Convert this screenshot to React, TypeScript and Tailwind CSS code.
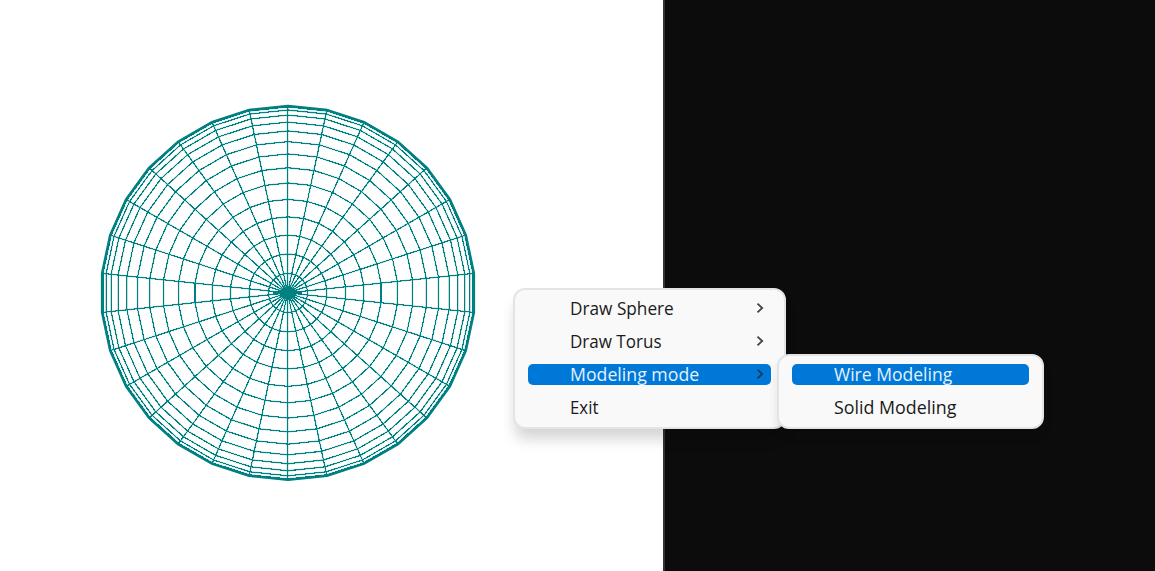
import React from 'react';
import clsx from 'clsx';

const SLICES = 30;
const RADIUS = 187;
const CX = 288;
const CY = 292.9;

const point = (radius: number, slice: number) => {
  const angle = (slice * 2 * Math.PI) / SLICES;
  return `${(CX + radius * Math.sin(angle)).toFixed(2)},${(CY - radius * Math.cos(angle)).toFixed(2)}`;
};

const slices = Array.from({ length: SLICES }, (_, i) => i);
const rings = Array.from({ length: 15 }, (_, i) => RADIUS * Math.sin(((i + 1) * Math.PI) / 30));

function Mesh() {
  return (
    <>
      {rings.map((r, i) => (
        <polygon key={i} points={slices.map((s) => point(r, s)).join(' ')} />
      ))}
      {slices.map((s) => (
        <polyline key={s} points={`${CX - 0.4},${CY} ${s % 15 === 0 ? `${CX - 0.4},${s ? CY + RADIUS : CY - RADIUS}` : point(RADIUS, s)}`} />
      ))}
    </>
  );
}

function WireSphere() {
  return (
    <svg width="663" height="571" viewBox="0 0 663 571" fill="none" stroke="#008080" className="block">
      <g strokeWidth="1.8" strokeOpacity="0.3">
        <Mesh />
      </g>
      <g strokeWidth="1.1" shapeRendering="crispEdges">
        <Mesh />
      </g>
      <polygon strokeWidth="2.3" points={slices.map((s) => point(RADIUS, s)).join(' ')} />
      <path d="M273 293h29" strokeWidth="2" />
      <ellipse cx="288" cy="293" rx="8.5" ry="6.5" fill="#008080" stroke="none" />
    </svg>
  );
}

type ItemProps = { label: string; fit: string; active?: boolean; submenu?: boolean };

function MenuItem({ label, fit, active, submenu }: ItemProps) {
  return (
    <div className="flex h-[33px] items-center">
      <div
        className={clsx(
          'flex h-[21px] w-full items-center justify-between rounded-[5px] pr-[7px] pl-[42px]',
          active ? 'bg-[#0078d7] text-[#e4f1fb]' : 'text-[#1a1a1a]',
        )}
      >
        <span className={clsx('-mt-0.5 inline-block origin-left leading-[26px] whitespace-nowrap', fit)}>{label}</span>
        {submenu && (
          <svg
            width="8"
            height="12"
            viewBox="0 0 8 12"
            fill="none"
            stroke={active ? '#173a5c' : '#444'}
            strokeWidth="1.8"
            className="-mt-px shrink-0"
          >
            <path d="M1.5 1.6 6.2 6 1.5 10.4" />
          </svg>
        )}
      </div>
    </div>
  );
}

export default function App() {
  return (
    <div className="relative flex h-[571px] w-[1155px] overflow-hidden bg-white font-['Open_Sans','Noto_Sans_CJK_KR',sans-serif] text-[18.5px]">
      <div className="w-[663px] shrink-0">
        <WireSphere />
      </div>
      <div className="flex-1 border-l-2 border-[#333333] bg-[#0c0c0c]" />
      <div className="absolute top-[288px] left-[513px] h-[141px] w-[273px] rounded-[12px] border-2 border-[#e4e4e4] bg-[#f9f9f9] px-[13px] pt-[2px] shadow-[0_12px_14px_-2px_rgba(0,0,0,0.17)]">
        <MenuItem label="Draw Sphere" fit="scale-x-[0.93]" submenu />
        <MenuItem label="Draw Torus" fit="scale-x-[0.92]" submenu />
        <MenuItem label="Modeling mode" fit="scale-x-[0.957]" active submenu />
        <MenuItem label="Exit" fit="scale-x-[0.91]" />
      </div>
      <div className="absolute top-[354px] left-[777px] h-[75px] w-[267px] rounded-[12px] border-2 border-[#e4e4e4] bg-[#f9f9f9] px-[13px] pt-[2px] shadow-[0_8px_10px_rgba(0,0,0,0.1)]">
        <MenuItem label="Wire Modeling" fit="scale-x-[0.948]" active />
        <MenuItem label="Solid Modeling" fit="scale-x-[0.964]" />
      </div>
    </div>
  );
}
